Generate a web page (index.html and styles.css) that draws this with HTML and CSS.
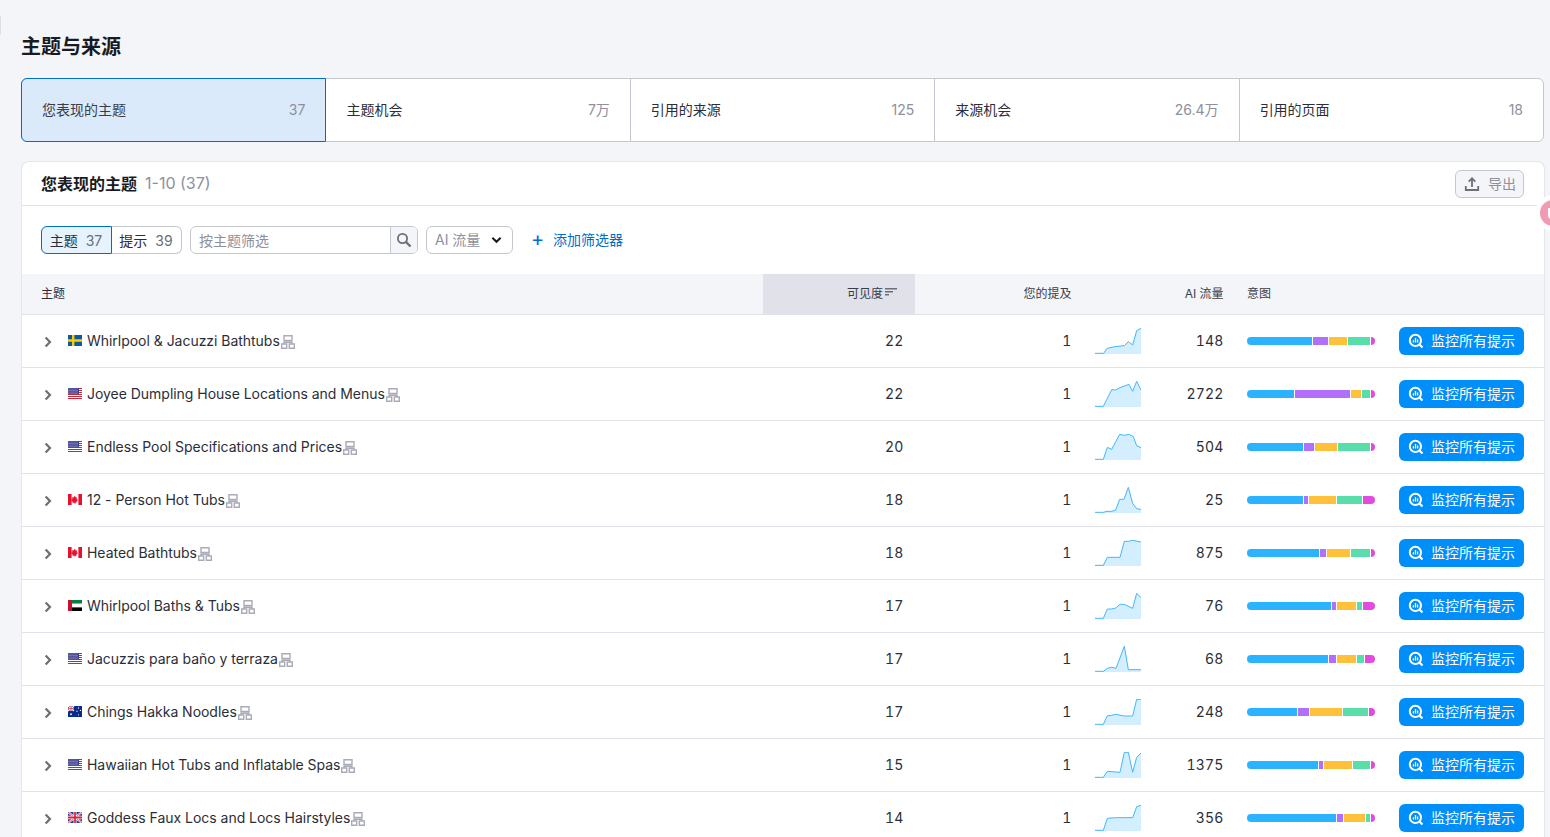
FILE: index.html
```html
<!DOCTYPE html>
<html lang="zh">
<head>
<meta charset="utf-8">
<title>主题与来源</title>
<link rel="stylesheet" href="styles.css">
</head>
<body>
<svg class="defs" width="0" height="0" aria-hidden="true">
  <symbol id="chev" viewBox="0 0 8 12"><path d="M1.600 1.400 6 6l-4.400 4.600" fill="none" stroke="currentColor" stroke-width="2.200"/></symbol>
  <symbol id="net" viewBox="0 0 14 14"><path d="M3 .7h8v4.800H3zM.7 9h5v4.300h-5zM8.300 9h5v4.300h-5zM3 9V7.300h8V9" fill="none" stroke="currentColor" stroke-width="1.400"/></symbol>
  <symbol id="lens" viewBox="0 0 16 16"><circle cx="7.400" cy="7.400" r="5.600" fill="none" stroke="#fff" stroke-width="2"/><path d="m11.500 11.500 3 3" stroke="#fff" stroke-width="2.200"/><path d="M5.400 7.200v2.400M7.500 5v4.600M9.600 6.600v3" stroke="#fff" stroke-width="1.300"/></symbol>
  <symbol id="f-se" viewBox="0 0 14 10" preserveAspectRatio="none"><rect width="14" height="10" fill="#0b5a9d"/><path d="M4 0h2.400v10H4zM0 3.800h14v2.400H0z" fill="#fecb00"/></symbol>
  <symbol id="f-us" viewBox="0 0 14 11" preserveAspectRatio="none"><rect width="14" height="11" fill="#fff"/><path d="M0 0h14v1H0zM0 2h14v1H0zM0 4h14v1H0zM0 6h14v1H0zM0 8h14v1H0zM0 10h14v1H0z" fill="#c3273a"/><rect width="11" height="6" fill="#3c3b8e"/><path d="M.5 1h10M.5 2.500h10M.5 4h10M.5 5.300h10" stroke="#d6d8ef" stroke-width=".7" stroke-dasharray="1 1"/></symbol>
  <symbol id="f-ca" viewBox="0 0 14 10" preserveAspectRatio="none"><rect width="14" height="10" fill="#fff"/><path d="M0 0h3.600v10H0zM10.400 0H14v10h-3.600z" fill="#e8112d"/><path d="M7 1.600 7.900 3.300l1.100-.5-.4 2.300.9-.3.300.9-1.500 1.400.2.800H7.300V9h-.6V7.900H4.500l.2-.8L3.200 5.700l.3-.9.900.3-.4-2.300 1.100.5z" fill="#e8112d"/></symbol>
  <symbol id="f-ae" viewBox="0 0 14 10" preserveAspectRatio="none"><rect width="14" height="3.400" fill="#00843d"/><rect y="3.400" width="14" height="3.300" fill="#fff"/><rect y="6.700" width="14" height="3.300" fill="#000"/><rect width="4" height="10" fill="#c8102e"/></symbol>
  <symbol id="f-au" viewBox="0 0 14 10" preserveAspectRatio="none"><rect width="14" height="10" fill="#0a2a8c"/><path d="M0 0l6 4.500M6 0 0 4.500" stroke="#fff" stroke-width="1.100"/><path d="M3 0v4.500M0 2.300h6" stroke="#fff" stroke-width="1.500"/><path d="M3 0v4.500M0 2.300h6" stroke="#d5213a" stroke-width=".7"/><g fill="#fff"><circle cx="3" cy="7.500" r=".9"/><circle cx="10.500" cy="1.800" r=".6"/><circle cx="12.500" cy="4" r=".6"/><circle cx="9" cy="4.800" r=".6"/><circle cx="10.500" cy="8" r=".6"/></g></symbol>
  <symbol id="f-gb" viewBox="0 0 14 10" preserveAspectRatio="none"><rect width="14" height="10" fill="#1c3f94"/><path d="M0 0l14 10M14 0 0 10" stroke="#fff" stroke-width="1.800"/><path d="M0 0l14 10M14 0 0 10" stroke="#d5213a" stroke-width=".7"/><path d="M7 0v10M0 5h14" stroke="#fff" stroke-width="3"/><path d="M7 0v10M0 5h14" stroke="#d5213a" stroke-width="1.700"/></symbol>
</svg>

<div class="corner-tab"></div>

<main class="page">
  <h1 class="page-title">主题与来源</h1>

  <nav class="tabs">
    <a class="tab tab-active"><span class="tab-label">您表现的主题</span><span class="tab-count">37</span></a>
    <a class="tab"><span class="tab-label">主题机会</span><span class="tab-count">7万</span></a>
    <a class="tab"><span class="tab-label">引用的来源</span><span class="tab-count">125</span></a>
    <a class="tab"><span class="tab-label">来源机会</span><span class="tab-count">26.4万</span></a>
    <a class="tab"><span class="tab-label">引用的页面</span><span class="tab-count">18</span></a>
  </nav>

  <section class="card">
    <header class="card-head">
      <h2 class="card-title">您表现的主题</h2>
      <span class="card-range">1-10 (37)</span>
      <button class="export-btn">
        <svg class="export-icon" viewBox="0 0 16 16"><path d="M8 11V2.500M4.700 5.600 8 2.200l3.300 3.400M1.800 10v4h12.400v-4" fill="none" stroke="currentColor" stroke-width="1.800"/></svg>
        <span class="export-label">导出</span>
      </button>
    </header>

    <div class="toolbar">
      <div class="seg">
        <button class="seg-item seg-active">主题<span class="seg-num">37</span></button>
        <button class="seg-item">提示<span class="seg-num">39</span></button>
      </div>
      <div class="search">
        <span class="search-input">按主题筛选</span>
        <span class="search-btn">
          <svg class="search-icon" viewBox="0 0 16 16"><circle cx="6.500" cy="6.500" r="4.600" fill="none" stroke="currentColor" stroke-width="1.800"/><path d="m10 10 4.500 4.500" stroke="currentColor" stroke-width="2.400"/></svg>
        </span>
      </div>
      <button class="select"><span class="select-label">AI 流量</span>
        <svg class="select-chev" viewBox="0 0 12 8"><path d="M1.500 1.500 6 6l4.500-4.500" fill="none" stroke="currentColor" stroke-width="2.200"/></svg>
      </button>
      <a class="add-filter"><span class="add-plus">+</span>添加筛选器</a>
    </div>

    <div class="grid-row grid-head">
      <div class="cell-topic head-topic">主题</div>
      <div class="cell-num head-sorted">可见度<svg class="sort-icon" viewBox="0 0 12 8"><path d="M0 .8h12M0 3.800h8M0 6.800h4" stroke="currentColor" stroke-width="1.500"/></svg></div>
      <div class="cell-num">您的提及</div>
      <div class="cell-spark"></div>
      <div class="cell-num">AI 流量</div>
      <div class="cell-intent">意图</div>
      <div class="cell-action"></div>
    </div>

    <div class="grid-row">
      <div class="cell-topic"><svg class="chev"><use href="#chev"/></svg><svg class="flag"><use href="#f-se"/></svg><span class="topic-name">Whirlpool &amp; Jacuzzi Bathtubs</span><svg class="net"><use href="#net"/></svg></div>
      <div class="cell-num">22</div>
      <div class="cell-num">1</div>
      <div class="cell-spark"><svg class="spark" viewBox="0 0 138 78"><polygon class="spark-fill" points="0,76 26,76 36,61 60,56 88,53 100,41 113,51 125,8 138,1 138,78 0,78"/><polyline class="spark-line" points="0,76 26,76 36,61 60,56 88,53 100,41 113,51 125,8 138,1"/></svg></div>
      <div class="cell-num">148</div>
      <div class="cell-intent"><div class="bar"><i class="s1" style="width:65px"></i><i class="s2" style="width:15px"></i><i class="s3" style="width:18px"></i><i class="s4" style="width:22px"></i><i class="s5" style="width:4px"></i></div></div>
      <div class="cell-action"><button class="monitor"><svg class="lens"><use href="#lens"/></svg>监控所有提示</button></div>
    </div>

    <div class="grid-row">
      <div class="cell-topic"><svg class="chev"><use href="#chev"/></svg><svg class="flag"><use href="#f-us"/></svg><span class="topic-name">Joyee Dumpling House Locations and Menus</span><svg class="net"><use href="#net"/></svg></div>
      <div class="cell-num">22</div>
      <div class="cell-num">1</div>
      <div class="cell-spark"><svg class="spark" viewBox="0 0 138 78"><polygon class="spark-fill" points="0,76 25,76 50,26 62,27 75,20 102,10 113,31 125,1 138,27 138,78 0,78"/><polyline class="spark-line" points="0,76 25,76 50,26 62,27 75,20 102,10 113,31 125,1 138,27"/></svg></div>
      <div class="cell-num">2722</div>
      <div class="cell-intent"><div class="bar"><i class="s1" style="width:47px"></i><i class="s2" style="width:55px"></i><i class="s3" style="width:10px"></i><i class="s4" style="width:8px"></i><i class="s5" style="width:4px"></i></div></div>
      <div class="cell-action"><button class="monitor"><svg class="lens"><use href="#lens"/></svg>监控所有提示</button></div>
    </div>

    <div class="grid-row">
      <div class="cell-topic"><svg class="chev"><use href="#chev"/></svg><svg class="flag"><use href="#f-us"/></svg><span class="topic-name">Endless Pool Specifications and Prices</span><svg class="net"><use href="#net"/></svg></div>
      <div class="cell-num">20</div>
      <div class="cell-num">1</div>
      <div class="cell-spark"><svg class="spark" viewBox="0 0 138 78"><polygon class="spark-fill" points="0,76 25,76 37,40 50,46 74,1 88,4 102,1 115,8 125,35 138,41 138,78 0,78"/><polyline class="spark-line" points="0,76 25,76 37,40 50,46 74,1 88,4 102,1 115,8 125,35 138,41"/></svg></div>
      <div class="cell-num">504</div>
      <div class="cell-intent"><div class="bar"><i class="s1" style="width:56px"></i><i class="s2" style="width:10px"></i><i class="s3" style="width:22px"></i><i class="s4" style="width:32px"></i><i class="s5" style="width:4px"></i></div></div>
      <div class="cell-action"><button class="monitor"><svg class="lens"><use href="#lens"/></svg>监控所有提示</button></div>
    </div>

    <div class="grid-row">
      <div class="cell-topic"><svg class="chev"><use href="#chev"/></svg><svg class="flag"><use href="#f-ca"/></svg><span class="topic-name">12 - Person Hot Tubs</span><svg class="net"><use href="#net"/></svg></div>
      <div class="cell-num">18</div>
      <div class="cell-num">1</div>
      <div class="cell-spark"><svg class="spark" viewBox="0 0 138 78"><polygon class="spark-fill" points="0,76 25,76 36,73 50,73 62,69 74,37 87,37 100,1 113,49 125,65 138,67 138,78 0,78"/><polyline class="spark-line" points="0,76 25,76 36,73 50,73 62,69 74,37 87,37 100,1 113,49 125,65 138,67"/></svg></div>
      <div class="cell-num">25</div>
      <div class="cell-intent"><div class="bar"><i class="s1" style="width:56px"></i><i class="s2" style="width:4px"></i><i class="s3" style="width:27px"></i><i class="s4" style="width:25px"></i><i class="s5" style="width:12px"></i></div></div>
      <div class="cell-action"><button class="monitor"><svg class="lens"><use href="#lens"/></svg>监控所有提示</button></div>
    </div>

    <div class="grid-row">
      <div class="cell-topic"><svg class="chev"><use href="#chev"/></svg><svg class="flag"><use href="#f-ca"/></svg><span class="topic-name">Heated Bathtubs</span><svg class="net"><use href="#net"/></svg></div>
      <div class="cell-num">18</div>
      <div class="cell-num">1</div>
      <div class="cell-spark"><svg class="spark" viewBox="0 0 138 78"><polygon class="spark-fill" points="0,76 25,76 37,52 75,52 88,4 100,4 113,1 138,6 138,78 0,78"/><polyline class="spark-line" points="0,76 25,76 37,52 75,52 88,4 100,4 113,1 138,6"/></svg></div>
      <div class="cell-num">875</div>
      <div class="cell-intent"><div class="bar"><i class="s1" style="width:72px"></i><i class="s2" style="width:6px"></i><i class="s3" style="width:23px"></i><i class="s4" style="width:19px"></i><i class="s5" style="width:4px"></i></div></div>
      <div class="cell-action"><button class="monitor"><svg class="lens"><use href="#lens"/></svg>监控所有提示</button></div>
    </div>

    <div class="grid-row">
      <div class="cell-topic"><svg class="chev"><use href="#chev"/></svg><svg class="flag"><use href="#f-ae"/></svg><span class="topic-name">Whirlpool Baths &amp; Tubs</span><svg class="net"><use href="#net"/></svg></div>
      <div class="cell-num">17</div>
      <div class="cell-num">1</div>
      <div class="cell-spark"><svg class="spark" viewBox="0 0 138 78"><polygon class="spark-fill" points="0,76 25,76 37,48 50,48 62,45 75,34 88,34 113,46 125,1 138,14 138,78 0,78"/><polyline class="spark-line" points="0,76 25,76 37,48 50,48 62,45 75,34 88,34 113,46 125,1 138,14"/></svg></div>
      <div class="cell-num">76</div>
      <div class="cell-intent"><div class="bar"><i class="s1" style="width:84px"></i><i class="s2" style="width:4px"></i><i class="s3" style="width:19px"></i><i class="s4" style="width:5px"></i><i class="s5" style="width:12px"></i></div></div>
      <div class="cell-action"><button class="monitor"><svg class="lens"><use href="#lens"/></svg>监控所有提示</button></div>
    </div>

    <div class="grid-row">
      <div class="cell-topic"><svg class="chev"><use href="#chev"/></svg><svg class="flag"><use href="#f-us"/></svg><span class="topic-name">Jacuzzis para baño y terraza</span><svg class="net"><use href="#net"/></svg></div>
      <div class="cell-num">17</div>
      <div class="cell-num">1</div>
      <div class="cell-spark"><svg class="spark" viewBox="0 0 138 78"><polygon class="spark-fill" points="0,76 25,76 37,67 50,64 63,67 88,1 100,71 138,71 138,78 0,78"/><polyline class="spark-line" points="0,76 25,76 37,67 50,64 63,67 88,1 100,71 138,71"/></svg></div>
      <div class="cell-num">68</div>
      <div class="cell-intent"><div class="bar"><i class="s1" style="width:81px"></i><i class="s2" style="width:7px"></i><i class="s3" style="width:19px"></i><i class="s4" style="width:7px"></i><i class="s5" style="width:10px"></i></div></div>
      <div class="cell-action"><button class="monitor"><svg class="lens"><use href="#lens"/></svg>监控所有提示</button></div>
    </div>

    <div class="grid-row">
      <div class="cell-topic"><svg class="chev"><use href="#chev"/></svg><svg class="flag"><use href="#f-au"/></svg><span class="topic-name">Chings Hakka Noodles</span><svg class="net"><use href="#net"/></svg></div>
      <div class="cell-num">17</div>
      <div class="cell-num">1</div>
      <div class="cell-spark"><svg class="spark" viewBox="0 0 138 78"><polygon class="spark-fill" points="0,76 25,76 37,50 50,49 62,46 88,51 113,51 125,1 138,1 138,78 0,78"/><polyline class="spark-line" points="0,76 25,76 37,50 50,49 62,46 88,51 113,51 125,1 138,1"/></svg></div>
      <div class="cell-num">248</div>
      <div class="cell-intent"><div class="bar"><i class="s1" style="width:50px"></i><i class="s2" style="width:11px"></i><i class="s3" style="width:32px"></i><i class="s4" style="width:25px"></i><i class="s5" style="width:6px"></i></div></div>
      <div class="cell-action"><button class="monitor"><svg class="lens"><use href="#lens"/></svg>监控所有提示</button></div>
    </div>

    <div class="grid-row">
      <div class="cell-topic"><svg class="chev"><use href="#chev"/></svg><svg class="flag"><use href="#f-us"/></svg><span class="topic-name">Hawaiian Hot Tubs and Inflatable Spas</span><svg class="net"><use href="#net"/></svg></div>
      <div class="cell-num">15</div>
      <div class="cell-num">1</div>
      <div class="cell-spark"><svg class="spark" viewBox="0 0 138 78"><polygon class="spark-fill" points="0,76 25,76 37,58 75,61 88,1 100,1 113,61 125,16 138,3 138,78 0,78"/><polyline class="spark-line" points="0,76 25,76 37,58 75,61 88,1 100,1 113,61 125,16 138,3"/></svg></div>
      <div class="cell-num">1375</div>
      <div class="cell-intent"><div class="bar"><i class="s1" style="width:71px"></i><i class="s2" style="width:4px"></i><i class="s3" style="width:28px"></i><i class="s4" style="width:17px"></i><i class="s5" style="width:4px"></i></div></div>
      <div class="cell-action"><button class="monitor"><svg class="lens"><use href="#lens"/></svg>监控所有提示</button></div>
    </div>

    <div class="grid-row">
      <div class="cell-topic"><svg class="chev"><use href="#chev"/></svg><svg class="flag"><use href="#f-gb"/></svg><span class="topic-name">Goddess Faux Locs and Locs Hairstyles</span><svg class="net"><use href="#net"/></svg></div>
      <div class="cell-num">14</div>
      <div class="cell-num">1</div>
      <div class="cell-spark"><svg class="spark" viewBox="0 0 138 78"><polygon class="spark-fill" points="0,76 25,76 37,40 62,38 113,38 125,5 138,1 138,78 0,78"/><polyline class="spark-line" points="0,76 25,76 37,40 62,38 113,38 125,5 138,1"/></svg></div>
      <div class="cell-num">356</div>
      <div class="cell-intent"><div class="bar"><i class="s1" style="width:89px"></i><i class="s2" style="width:6px"></i><i class="s3" style="width:21px"></i><i class="s4" style="width:4px"></i><i class="s5" style="width:4px"></i></div></div>
      <div class="cell-action"><button class="monitor"><svg class="lens"><use href="#lens"/></svg>监控所有提示</button></div>
    </div>
  </section>
</main>

<div class="float-widget">
  <svg class="float-mark" viewBox="0 0 36 36"><circle cx="18" cy="18" r="18" fill="#fff" opacity=".9"/><circle cx="18" cy="18" r="13" fill="#f09ab4"/><path d="M14 13v7a4 4 0 0 0 8 0M18 13v6" fill="none" stroke="#fff" stroke-width="2"/></svg>
</div>
</body>
</html>
```

FILE: styles.css
```css
* { box-sizing: border-box; }
html, body { height: 100%; }
body {
  margin: 0;
  overflow: hidden;
  background: #f4f5f9;
  color: #191b23;
  font-family: Inter, "Noto Sans CJK SC", "Liberation Sans", sans-serif;
  font-size: 14px;
}
button { font: inherit; color: inherit; cursor: pointer; }
.defs { position: absolute; }
.corner-tab {
  position: absolute; left: -8px; top: 13px;
  width: 9px; height: 24px;
  border: 1px solid #dcdee5; border-radius: 4px; background: #fff;
}
.page { padding: 34px 6px 0 21px; }
.page-title { margin: 0; font-size: 20px; line-height: 26px; font-weight: 700; color: #191b23; }
.tabs {
  display: flex; height: 64px; margin-top: 18px;
  background: #fff; border: 1px solid #c4c7cf; border-radius: 6px;
}
.tab {
  flex: 1 1 0; display: flex; align-items: center; justify-content: space-between;
  padding: 0 20px 2px; border-right: 1px solid #c4c7cf; color: #2b2e38;
}
.tab:last-child { border-right: 0; }
.tab-active {
  margin: -1px 0 -1px -1px;
  background: #dbeafa; border: 1px solid #006dca; border-radius: 6px 0 0 6px; color: #3a3d48;
}
.tab-count { color: #8e909d; }
.card {
  margin: 19px -1px 0 0; background: #fff;
  border: 1px solid #e4e6ec; border-bottom: 0; border-radius: 8px 8px 0 0;
}
.card-head {
  display: flex; align-items: center; height: 44px; padding: 0 20px 2px 19px;
  border-bottom: 1px solid #e0e1e9;
}
.card-title { margin: 0; font-size: 16px; font-weight: 700; color: #191b23; }
.card-range { margin-left: 8px; font-size: 16px; color: #8e909d; }
.export-btn {
  display: flex; align-items: center; gap: 8px; flex: none; margin: 2px 0 0 auto;
  width: 69px; height: 28px; padding: 0 7px 0 8px;
  background: #f4f5f9; border: 1px solid #c4c7cf; border-radius: 6px; color: #8e909d;
}
.export-icon { width: 16px; height: 16px; flex: none; color: #6c6e79; }
.export-label { white-space: nowrap; margin-top: -1px; }
.toolbar { display: flex; align-items: center; height: 68px; padding: 0 19px; }
.seg { display: flex; height: 28px; }
.seg-item {
  display: flex; align-items: center; justify-content: center; gap: 8px; padding: 0 1px 0 0;
  background: #fff; border: 1px solid #c4c7cf; border-left: 0; border-radius: 0 6px 6px 0;
  width: 70px; color: #2b2e38;
}
.seg-active {
  width: 71px; background: #e6f3fd; border: 1px solid #006dca; border-radius: 6px 0 0 6px;
}
.seg-num { color: #6c6e79; }
.search {
  display: flex; width: 228px; height: 28px; margin-left: 8px;
  border: 1px solid #c4c7cf; border-radius: 6px; background: #fff;
}
.search-input { flex: 1; padding-left: 8px; line-height: 28px; color: #8e909d; }
.search-btn {
  display: flex; align-items: center; justify-content: center; width: 27px;
  background: #f4f5f9; border-left: 1px solid #c4c7cf; border-radius: 0 5px 5px 0;
}
.search-icon { width: 16px; height: 16px; color: #6c6e79; }
.select {
  display: flex; align-items: center; justify-content: space-between;
  width: 87px; height: 28px; margin-left: 8px; padding: 0 10px 0 8px;
  background: #fff; border: 1px solid #c4c7cf; border-radius: 6px; color: #8e909d;
}
.select-label { margin-top: -2px; }
.select-chev { width: 11px; height: 8px; color: #191b23; }
.add-filter { display: flex; align-items: center; margin-left: 18px; padding-bottom: 2px; color: #006dca; }
.add-plus { width: 22px; font-size: 20px; line-height: 20px; }
.grid-row {
  display: grid;
  grid-template-columns: 741px 152px 168px 70px 82px 152px 1fr;
  height: 53px; border-bottom: 1px solid #e0e1e9;
  align-items: center;
}
.grid-head {
  height: 41px; background: #f4f5f9; font-size: 12px; color: #3a3d48;
}
.grid-head > div { height: 100%; display: flex; align-items: center; padding-bottom: 4px; }
.grid-head .head-topic { padding-left: 19px; }
.grid-head .head-sorted { background: #e0e1e9; justify-content: flex-end; padding-right: 18px; padding-bottom: 4px; }
.grid-head .cell-num { justify-content: flex-end; letter-spacing: 0; color: #3a3d48; }
.sort-icon { width: 12px; height: 8px; margin: 0 0 1px 2px; color: #6c6e79; }
.cell-topic { display: flex; align-items: center; padding-left: 22px; color: #2b2e38; }
.topic-name { margin-top: -2px; letter-spacing: -.03px; }
.cell-num {
  text-align: right; padding: 0 11.500px 2px 0; color: #2b2e38;
  font-variant-numeric: tabular-nums; letter-spacing: .2px;
}
.cell-spark { padding-left: 12px; }
.cell-intent { padding-left: 12px; }
.cell-action { padding-left: 12px; }
.chev { width: 8px; height: 12px; margin: 2px 16px 0 0; color: #6c6e79; }
.flag { width: 14px; height: 11px; margin: 0 5px 1px 0; }
.net { width: 14px; height: 14px; margin-left: 1px; margin-top: 1px; color: #a9abb8; }
.spark { display: block; width: 46px; height: 26px; }
.spark-fill { fill: #d3eeff; }
.spark-line { fill: none; stroke: #45b6fb; stroke-width: 3; stroke-linejoin: round; }
.bar { display: flex; gap: 1px; width: 128px; height: 8px; border-radius: 4px; overflow: hidden; }
.bar i { display: block; height: 100%; }
.s1 { background: #2bb3ff; }
.s2 { background: #b070fb; }
.s3 { background: #ffc13b; }
.s4 { background: #59ddaa; }
.s5 { background: #e04ce0; }
.monitor {
  display: flex; align-items: center; gap: 7px; width: 125px; height: 28px; padding: 0 8px 2px 9px;
  background: #008ff8; border: 0; border-radius: 6px; color: #fff; white-space: nowrap;
}
.lens { width: 16px; height: 16px; flex: none; margin-top: 2px; }
.float-widget { position: absolute; left: 1535px; top: 195px; width: 36px; height: 36px; }
.float-mark { display: block; width: 36px; height: 36px; }
```
